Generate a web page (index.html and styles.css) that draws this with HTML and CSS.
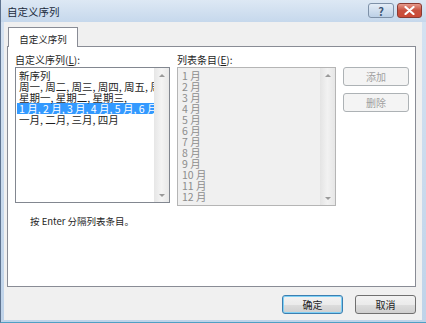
FILE: index.html
```html
<!DOCTYPE html>
<html lang="zh-CN">
<head>
    <meta charset="UTF-8">
    <title>自定义序列</title>
    <link rel="stylesheet" href="styles.css">
</head>
<body>
    <div class="window">
        <div class="titlebar">
            <span class="title">自定义序列</span>
            <div class="caption-btns">
                <div class="cap help">?</div>
                <div class="cap close">
                    <svg width="11" height="9" viewBox="0 0 11 9">
                        <path d="M1.5 1 L9.5 8 M9.5 1 L1.5 8" stroke="#fff" stroke-width="2.2" stroke-linecap="round"/>
                    </svg>
                </div>
            </div>
        </div>
        <div class="client">
            <div class="tabs">
                <div class="tab">自定义序列</div>
            </div>
            <div class="panel">
                <div class="cols">
                    <div class="col col-left">
                        <div class="label">自定义序列(<u>L</u>):</div>
                        <div class="listbox">
                            <ul class="items">
                                <li>新序列</li>
                                <li>周一, 周二, 周三, 周四, 周五, 周六, 周日</li>
                                <li>星期一, 星期二, 星期三,</li>
                                <li class="selected">1 月, 2 月, 3 月, 4 月, 5 月, 6 月, 7 月, 8 月</li>
                                <li>一月, 二月, 三月, 四月</li>
                            </ul>
                            <div class="scrollbar">
                                <span class="arrow up"></span>
                                <span class="arrow down"></span>
                            </div>
                        </div>
                    </div>
                    <div class="col col-right">
                        <div class="label">列表条目(<u>E</u>):</div>
                        <div class="listbox disabled">
                            <ul class="items">
                                <li>1 月</li>
                                <li>2 月</li>
                                <li>3 月</li>
                                <li>4 月</li>
                                <li>5 月</li>
                                <li>6 月</li>
                                <li>7 月</li>
                                <li>8 月</li>
                                <li>9 月</li>
                                <li>10 月</li>
                                <li>11 月</li>
                                <li>12 月</li>
                            </ul>
                            <div class="scrollbar">
                                <span class="arrow up"></span>
                                <span class="arrow down"></span>
                            </div>
                        </div>
                    </div>
                    <div class="col col-btns">
                        <button class="btn" disabled>添加</button>
                        <button class="btn" disabled>删除</button>
                    </div>
                </div>
                <p class="hint">按 Enter 分隔列表条目。</p>
            </div>
            <div class="footer">
                <button class="btn default">确定</button>
                <button class="btn">取消</button>
            </div>
        </div>
    </div>
</body>
</html>
```

FILE: styles.css
```css
body {
    margin: 0;
    overflow: hidden;
    background: #fff;
    font-family: "Noto Sans CJK SC", "Noto Sans", sans-serif;
    font-size: 10px;
    color: #1e1e1e;
}

.window {
    width: 426px;
    height: 323px;
    box-sizing: border-box;
    display: flex;
    flex-direction: column;
    background: linear-gradient(#d6e3f2, #bfd3e9);
    border-left: 1px solid #5f7490;
    border-bottom: 1px solid #4f9fc4;
}

.titlebar {
    height: 22px;
    display: flex;
    align-items: center;
    justify-content: space-between;
    padding: 0 4px 0 6px;
    background: linear-gradient(#dde8f4, #c6d8ec);
}

.title {
    font-size: 10.5px;
    color: #1b2b3d;
}

.caption-btns {
    display: flex;
    gap: 3px;
    align-self: flex-start;
    margin-top: 3px;
}

.cap {
    height: 15px;
    box-sizing: border-box;
    border: 1px solid #7e91a8;
    border-radius: 3px;
    display: flex;
    align-items: center;
    justify-content: center;
}

.help {
    width: 26px;
    background: linear-gradient(#e4edf7, #bcd0e6);
    color: #3d5675;
    font-size: 11px;
    font-weight: bold;
}

.close {
    width: 25px;
    border-color: #8a3b33;
    background: linear-gradient(#e69a8c, #c8513f 50%, #cc4a36);
}

.client {
    flex: 1;
    margin: 0 4px 2px 3px;
    background: #f0f0f0;
    display: flex;
    flex-direction: column;
    padding: 5px 6px 0 3px;
}

.tabs {
    display: flex;
    padding-left: 1px;
    position: relative;
    z-index: 1;
}

.tab {
    width: 70px;
    height: 20px;
    box-sizing: border-box;
    border: 1px solid #898c95;
    border-bottom: none;
    background: #fff;
    text-align: center;
    line-height: 22px;
    font-size: 9.5px;
}

.panel {
    height: 241px;
    box-sizing: border-box;
    margin-top: -1px;
    background: #fff;
    border: 1px solid #898c95;
    padding: 6px 0 0 7px;
}

.cols {
    display: flex;
    gap: 7px;
}

.label {
    height: 14px;
    line-height: 13px;
}

.listbox {
    display: flex;
    box-sizing: border-box;
    border: 1px solid #828790;
    background: #fff;
    overflow: hidden;
}

.col-left .listbox {
    width: 155px;
    height: 136px;
}

.col-right .listbox {
    width: 159px;
    height: 139px;
    border-color: #b5b5b5;
    background: #f0f0f0;
}

.items {
    list-style: none;
    margin: 0;
    padding: 2px 0 0 1px;
    flex: 1;
    min-width: 0;
    overflow: hidden;
}

.items li {
    height: 11px;
    line-height: 11px;
    padding-left: 2px;
    white-space: nowrap;
    font-size: 10.5px;
}

.items li.selected {
    background: #3399ff;
    color: #fff;
}

.disabled .items {
    padding-left: 2px;
    color: #8d8d8d;
}

.disabled .items li {
    font-size: 10.5px;
}

.scrollbar {
    width: 15px;
    flex-shrink: 0;
    display: flex;
    flex-direction: column;
    justify-content: space-between;
    align-items: center;
    padding: 6px 0 5px;
    background: linear-gradient(90deg, #e6e6e6, #f4f4f4 50%, #e8e8e8);
}

.disabled .scrollbar {
    background: linear-gradient(90deg, #e4e4e4, #f2f2f2 50%, #e6e6e6);
}

.arrow {
    width: 0;
    height: 0;
    border-left: 3px solid transparent;
    border-right: 3px solid transparent;
}

.arrow.up {
    border-bottom: 3px solid #9a9a9a;
}

.arrow.down {
    border-top: 3px solid #9a9a9a;
}

.col-btns {
    padding-top: 14px;
    display: flex;
    flex-direction: column;
    gap: 7px;
}

.btn {
    width: 66px;
    height: 19px;
    box-sizing: border-box;
    padding: 0;
    font-family: inherit;
    font-size: 10px;
    color: #1e1e1e;
    border: 1px solid #707070;
    border-radius: 3px;
    background: linear-gradient(#f2f2f2, #ebebeb 50%, #dddddd 51%, #cfcfcf);
}

.btn:disabled {
    border-color: #adb2b5;
    background: #f4f4f4;
    color: #a0a0a0;
}

.hint {
    margin: 9px 0 0 15px;
    line-height: 13px;
    font-size: 9.5px;
}

.footer {
    display: flex;
    justify-content: flex-end;
    gap: 12px;
    padding-top: 8px;
}

.footer .btn {
    width: 61px;
}

.btn.default {
    border-color: #3c7fb1;
    box-shadow: inset 0 0 0 1px #7fd0f5;
}
```
